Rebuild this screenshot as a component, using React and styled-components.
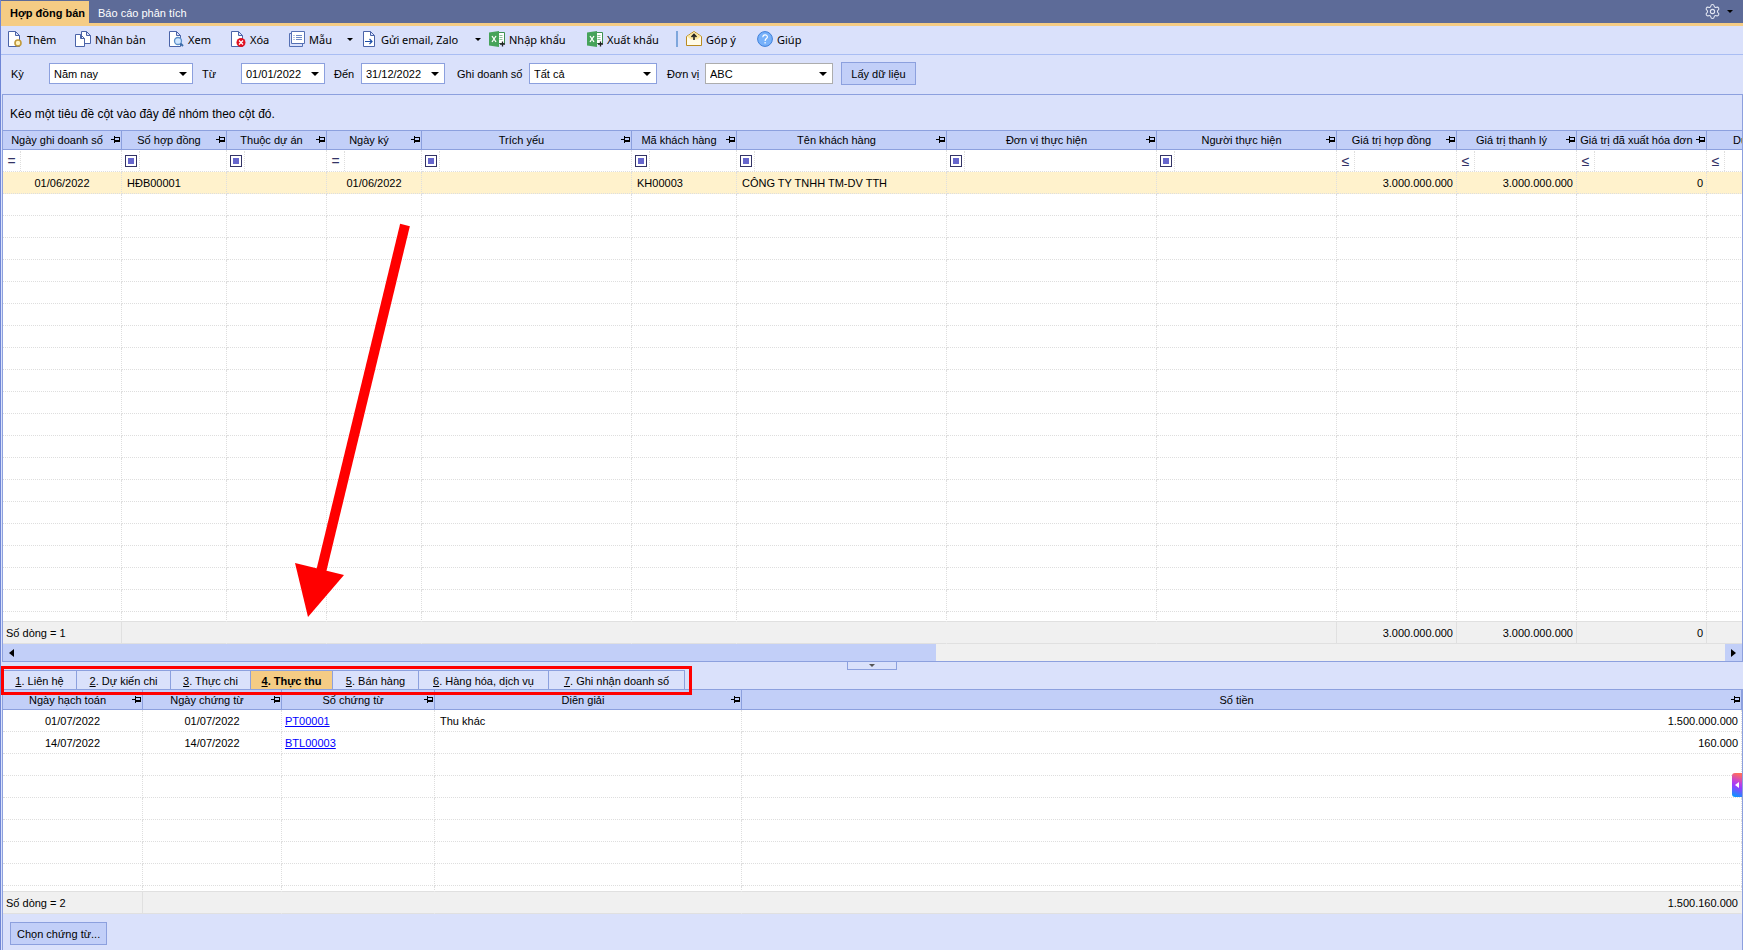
import React from 'react';
import styled, { createGlobalStyle, css } from 'styled-components';
import { Settings } from 'lucide-react';

const GlobalStyle = createGlobalStyle`
  * {
    box-sizing: border-box;
  }

  body {
    margin: 0;
    font-family: 'Liberation Sans', Arial, sans-serif;
    font-size: 11px;
    color: #000;
  }

  button, input, select {
    font: inherit;
    color: inherit;
    margin: 0;
  }
`;

const Page = styled.div`
  position: relative;
  display: flex;
  flex-direction: column;
  height: 100vh;
  overflow: hidden;
  background-color: #dae1fb;
  border-left: 1px solid #6f86d6;
`;

const TitleBar = styled.header`
  display: flex;
  flex: none;
  height: 26px;
  padding-top: 1px;
  background-color: #5d6b98;
  border-bottom: 3px solid #f5cc84;
`;

const PageTab = styled.button`
  padding: 2px 4px 0 9px;
  border: 0;
  background-color: ${(p) => (p.$active ? '#f5cc84' : 'transparent')};
  color: ${(p) => (p.$active ? '#000' : '#fff')};
  font-weight: ${(p) => (p.$active ? 'bold' : 'normal')};
  text-align: left;
  white-space: nowrap;
`;

const SettingsButton = styled.button`
  display: flex;
  align-items: center;
  gap: 6px;
  margin-left: auto;
  padding: 0 10px 2px 0;
  border: 0;
  background: none;
`;

const Toolbar = styled.div`
  display: flex;
  flex: none;
  align-items: center;
  height: 29px;
  padding: 0 0 2px 6px;
  border-bottom: 1px solid #a9bdf3;
`;

const ToolButton = styled.button`
  display: flex;
  align-items: center;
  gap: 4px;
  width: ${(p) => p.$width}px;
  height: 24px;
  padding: 0;
  border: 0;
  background: none;
  font-family: 'Noto Sans', sans-serif;
  white-space: nowrap;

  svg {
    flex: none;
  }
`;

const Separator = styled.div`
  width: 2px;
  height: 16px;
  margin-right: 8px;
  background-color: #7ea6dc;
`;

const Caret = styled.span`
  width: 0;
  height: 0;
  border: 3px solid transparent;
  border-top-color: ${(p) => p.$color || '#000'};
  border-bottom: 0;
`;

const ToolCaret = styled(Caret)`
  margin-left: auto;
  margin-right: 8px;
`;

const FilterBar = styled.form`
  display: flex;
  flex: none;
  align-items: center;
  height: 39px;
  padding: 0 0 2px 10px;
`;

const Label = styled.label`
  width: ${(p) => p.$width}px;
  white-space: nowrap;
`;

const SelectBox = styled.div`
  position: relative;
  width: ${(p) => p.$width}px;
  margin-right: ${(p) => p.$after}px;

  &::after {
    content: '';
    position: absolute;
    right: 6px;
    top: 9px;
    border: 4px solid transparent;
    border-top-color: #000;
    border-bottom: 0;
    pointer-events: none;
  }
`;

const Select = styled.select`
  display: block;
  width: 100%;
  height: 21px;
  padding: 0 16px 0 4px;
  appearance: none;
  border: 1px solid ${(p) => (p.$muted ? '#adadad' : '#8ca0de')};
  border-radius: 0;
  background-color: #fff;
`;

const PushButton = styled.button`
  height: 23px;
  padding: 0 6px;
  min-width: ${(p) => p.$width}px;
  border: 1px solid #8ca0de;
  background-color: #c2cff8;
  white-space: nowrap;
`;

const Panel = styled.section`
  display: flex;
  flex-direction: column;
  flex: ${(p) => (p.$grow ? '1' : 'none')};
  min-height: 0;
  margin-left: 1px;
  border: 1px solid #8ca0de;
  border-width: ${(p) => (p.$grow ? '1px' : '0 1px')};
`;

const GroupHint = styled.div`
  display: flex;
  align-items: center;
  flex: none;
  height: 35px;
  padding: 2px 0 0 7px;
  font-size: 12px;
`;

const TableClip = styled.div`
  overflow: hidden;
  min-height: 0;
  background-color: #fff;
  ${(p) => (p.$height ? css`flex: 0 0 ${p.$height}px;` : css`flex: 1;`)}
`;

const SummaryClip = styled.div`
  flex: none;
  overflow: hidden;
`;

const Table = styled.table`
  width: 100%;
  min-width: ${(p) => p.$minWidth || 0}px;
  table-layout: fixed;
  border-collapse: separate;
  border-spacing: 0;
`;

const HeadCell = styled.th`
  height: ${(p) => p.$height}px;
  padding: 0;
  border: 1px solid #8ca0de;
  border-left: 0;
  background-color: #c2cff8;
  font-weight: normal;
`;

const HeadContent = styled.div`
  display: flex;
  align-items: center;

  span {
    flex: 1;
    text-align: center;
    white-space: nowrap;
  }

  svg {
    flex: none;
  }
`;

const Cell = styled.td`
  height: 22px;
  padding: 0 ${(p) => (p.$align === 'center' ? 5 : 3)}px 0 ${(p) => (p.$link ? 3 : 5)}px;
  border-right: 1px dotted #dedede;
  border-bottom: 1px dotted #dedede;
  text-align: ${(p) => p.$align || 'left'};
  white-space: nowrap;
  background-color: ${(p) => (p.$selected ? '#fff2cc' : '#fff')};

  a {
    color: #0000ff;
  }
`;

const FilterCell = styled(Cell)`
  padding: 0;
`;

const FilterContent = styled.div`
  display: flex;
  align-items: stretch;
  height: 20px;
`;

const Operator = styled.button`
  display: flex;
  align-items: center;
  justify-content: center;
  flex: none;
  width: 18px;
  padding: 0;
  border: 0;
  border-right: 1px dotted #dedede;
  background: none;
  color: #333366;
  font-size: 14px;
`;

const ContainsBox = styled.span`
  width: 12px;
  height: 12px;
  padding: 2px;
  border: 1px solid #333366;
  background-color: #6666cc;
  background-clip: content-box;
`;

const FilterInput = styled.input`
  flex: 1;
  min-width: 0;
  padding: 0 3px;
  border: 0;
  outline: none;
  background: none;
`;

const SummaryCell = styled.td`
  height: 23px;
  padding: 0 3px;
  border-top: 1px solid #e0e0e0;
  border-bottom: 1px solid #e0e0e0;
  border-right: 1px solid ${(p) => (p.$divider ? '#e0e0e0' : '#f0f0f0')};
  background-color: #f0f0f0;
  text-align: ${(p) => p.$align || 'left'};
  white-space: nowrap;
`;

const ScrollBar = styled.div`
  display: flex;
  flex: none;
  height: 17px;
  background-color: #f0f0f0;
`;

const ScrollButton = styled.button`
  display: flex;
  align-items: center;
  justify-content: center;
  width: 17px;
  padding: 0;
  border: 0;
  background-color: #c2cff8;
`;

const ScrollTrack = styled.div`
  display: grid;
  grid-template-columns: 43fr 37fr;
  flex: 1;
`;

const ScrollThumb = styled.div`
  background-color: #c2cff8;
`;

const DetailBar = styled.div`
  position: relative;
  display: flex;
  align-items: flex-end;
  flex: none;
  height: 27px;
  margin-left: 2px;
`;

const DetailTab = styled.button`
  width: ${(p) => p.$width}px;
  height: 19px;
  padding: 2px 0 0;
  border: 1px solid #8ca0de;
  border-left: 0;
  border-bottom: 0;
  background-color: ${(p) => (p.$active ? '#f5cc84' : '#dae1fb')};
  font-weight: ${(p) => (p.$active ? 'bold' : 'normal')};
  white-space: nowrap;
`;

const Highlight = styled.div`
  position: absolute;
  z-index: 1;
  left: -2px;
  top: 4px;
  width: 691px;
  height: 29px;
  border: 3px solid #ff0000;
  pointer-events: none;
`;

const Splitter = styled.button`
  position: absolute;
  left: calc(50% - 26px);
  top: 0;
  display: flex;
  align-items: center;
  justify-content: center;
  width: 50px;
  height: 8px;
  padding: 0;
  border: 1px solid #8ca0de;
  border-top: 0;
  background-color: #dae1fb;
`;

const Footer = styled.footer`
  flex: none;
  height: 36px;
  padding: 8px 0 0 7px;
  margin-left: 1px;
  border: 1px solid #8ca0de;
  border-width: 0 1px;
`;

const SideHandle = styled.button`
  position: absolute;
  right: 1px;
  bottom: 153px;
  display: flex;
  align-items: center;
  justify-content: flex-end;
  width: 10px;
  height: 24px;
  padding: 0 3px 0 0;
  border: 0;
  border-radius: 3px 0 0 3px;
  background: linear-gradient(20deg, #0a95ff 5%, #9a3cff 45%, #c040e0 60%, #ff6c60 92%);
`;

const Pointer = styled.svg`
  position: absolute;
  left: 294px;
  top: 222px;
  pointer-events: none;
`;

// icons

const Sheet = ({ x = 1 }) => (
  <path d={`M${x + 0.5} .5h7l4 4v11h-11z M${x + 7.5} .5v4h4`} fill="#fff" stroke="#4a63a8" />
);

const AddIcon = () => (
  <svg width="16" height="16">
    <Sheet x={1} />
    <circle cx="11" cy="12" r="3" fill="#fff3c0" stroke="#c29a3a" strokeWidth="1.6" />
  </svg>
);

const CopyIcon = () => (
  <svg width="16" height="16">
    <path d="M6.500 .5h5l4 4v8h-9z M11.500 .5v4h4" fill="#fff" stroke="#4a63a8" />
    <path d="M.5 3.500h5l4 4v8h-9z M5.500 3.500v4h4" fill="#fff" stroke="#4a63a8" />
  </svg>
);

const ViewIcon = () => (
  <svg width="16" height="16">
    <Sheet x={1} />
    <circle cx="10" cy="10" r="3.500" fill="#cfe6ff" stroke="#5b8fc9" strokeWidth="1.300" />
    <path d="M12.500 12.500l2.500 2.500" stroke="#3c6ca8" strokeWidth="2" />
  </svg>
);

const DeleteIcon = () => (
  <svg width="16" height="16">
    <Sheet x={1} />
    <circle cx="11" cy="11.500" r="4.500" fill="#e01020" />
    <path d="M9 9.500l4 4m0-4l-4 4" stroke="#fff" strokeWidth="1.300" />
  </svg>
);

const TemplateIcon = () => (
  <svg width="17" height="16" fill="none" stroke="#5570b4">
    <path d="M3.500 .5h13v12h-13z" fill="#fff" />
    <path d="M3 2.500h-1.500v13h13v-2.500" />
    <path d="M5.500 4.500h1m1.500 0h6M5.500 6.500h1m1.500 0h6M5.500 8.500h1m1.500 0h6" stroke="#6d8ac6" />
  </svg>
);

const SendIcon = () => (
  <svg width="16" height="16">
    <Sheet x={2} />
    <path d="M4 10.500h7M8.500 8l2.500 2.500-2.500 2.500" fill="none" stroke="#1f4fa8" strokeWidth="1.200" />
  </svg>
);

const ExcelIcon = () => (
  <svg width="16" height="16">
    <path d="M8.500 1.500h7v11h-7z" fill="#fff" stroke="#3d9150" />
    <path d="M10.500 4.500h3m-3 2h3m-3 2h3" stroke="#8fc29a" />
    <path d="M0 1.500l10-1.500v16l-10-1.500z" fill="#46a35a" />
    <path d="M3 5l4 6m0-6l-4 6" stroke="#fff" strokeWidth="1.300" />
    <path d="M11 13h5M13.500 10.500v5" stroke="#222" strokeWidth="1.300" />
  </svg>
);

const FeedbackIcon = () => (
  <svg width="16" height="16">
    <path d="M.5 5.500l7.500-5 7.500 5v9h-15z" fill="#fffbe8" stroke="#b98a20" />
    <path d="M1 5.500L8 1l7 4.500-4 3H5z" fill="#fbe7a0" />
    <path d="M8 9V4M5.500 6L8 3.500 10.500 6" fill="none" stroke="#222" strokeWidth="1.600" />
  </svg>
);

const HelpIcon = () => (
  <svg width="16" height="16">
    <circle cx="8" cy="8" r="7.400" fill="#77b1fa" stroke="#3f7fd8" />
    <path d="M5.800 6.200c0-3.200 4.600-3 4.600-.3 0 1.700-2.300 1.700-2.300 4M8.100 11v1.400" fill="none" stroke="#fff" strokeWidth="1.200" />
  </svg>
);

const PinIcon = () => (
  <svg width="10" height="8" shapeRendering="crispEdges">
    <path d="M0 3h3v1H0zM3 0h1v7H3zM4 1h5v1H4zM8 1h1v5H8zM4 4h5v2H4z" />
  </svg>
);

const toolItems = [
  { label: 'Thêm', icon: AddIcon, width: 68 },
  { label: 'Nhân bản', icon: CopyIcon, width: 93 },
  { label: 'Xem', icon: ViewIcon, width: 62 },
  { label: 'Xóa', icon: DeleteIcon, width: 58 },
  { label: 'Mẫu', icon: TemplateIcon, width: 73, menu: true },
  { label: 'Gửi email, Zalo', icon: SendIcon, width: 128, menu: true },
  { label: 'Nhập khẩu', icon: ExcelIcon, width: 98 },
  { label: 'Xuất khẩu', icon: ExcelIcon, width: 89 },
  { separator: true },
  { label: 'Góp ý', icon: FeedbackIcon, width: 71 },
  { label: 'Giúp', icon: HelpIcon, width: 60 },
];

const filters = [
  { id: 'period', label: 'Kỳ', value: 'Năm nay', labelWidth: 38, width: 144, after: 9 },
  { id: 'from', label: 'Từ', value: '01/01/2022', labelWidth: 39, width: 84, after: 9 },
  { id: 'to', label: 'Đến', value: '31/12/2022', labelWidth: 27, width: 84, after: 12 },
  { id: 'sales', label: 'Ghi doanh số', value: 'Tất cả', labelWidth: 72, width: 128, after: 10 },
  { id: 'unit', label: 'Đơn vị', value: 'ABC', labelWidth: 38, width: 128, after: 8, muted: true },
];

const contractColumns = [
  { title: 'Ngày ghi doanh số', width: 119, op: '=', align: 'center', value: '01/06/2022', total: 'Số dòng = 1', divider: true },
  { title: 'Số hợp đồng', width: 105, value: 'HĐB00001' },
  { title: 'Thuộc dự án', width: 100 },
  { title: 'Ngày ký', width: 95, op: '=', align: 'center', value: '01/06/2022' },
  { title: 'Trích yếu', width: 210 },
  { title: 'Mã khách hàng', width: 105, value: 'KH00003' },
  { title: 'Tên khách hàng', width: 210, value: 'CÔNG TY TNHH TM-DV TTH' },
  { title: 'Đơn vị thực hiện', width: 210 },
  { title: 'Người thực hiện', width: 180, divider: true },
  { title: 'Giá trị hợp đồng', width: 120, op: '≤', align: 'right', value: '3.000.000.000', total: '3.000.000.000', divider: true },
  { title: 'Giá trị thanh lý', width: 120, op: '≤', align: 'right', value: '3.000.000.000', total: '3.000.000.000', divider: true },
  { title: 'Giá trị đã xuất hóa đơn', width: 130, op: '≤', align: 'right', value: '0', total: '0', divider: true },
  { title: 'Dự kiến thu', width: 120, op: '≤', align: 'right' },
];

const receiptColumns = [
  { title: 'Ngày hạch toán', key: 'posted', width: 140, align: 'center', total: 'Số dòng = 2', divider: true },
  { title: 'Ngày chứng từ', key: 'date', width: 139, align: 'center' },
  { title: 'Số chứng từ', key: 'number', width: 153, link: true },
  { title: 'Diễn giải', key: 'note', width: 307 },
  { title: 'Số tiền', key: 'amount', align: 'right', total: '1.500.160.000' },
];

const receipts = [
  { posted: '01/07/2022', date: '01/07/2022', number: 'PT00001', note: 'Thu khác', amount: '1.500.000.000' },
  { posted: '14/07/2022', date: '14/07/2022', number: 'BTL00003', note: '', amount: '160.000' },
];

const detailTabs = [
  { title: 'Liên hệ', width: 74 },
  { title: 'Dự kiến chi', width: 94 },
  { title: 'Thực chi', width: 80 },
  { title: 'Thực thu', width: 82, active: true },
  { title: 'Bán hàng', width: 86 },
  { title: 'Hàng hóa, dịch vụ', width: 130 },
  { title: 'Ghi nhận doanh số', width: 136 },
];

const contractWidth = contractColumns.reduce((sum, c) => sum + c.width, 0);

const Columns = ({ columns }) => (
  <colgroup>
    {columns.map((c) => <col key={c.title} width={c.width} />)}
  </colgroup>
);

const Head = ({ columns, height }) => (
  <thead>
    <tr>
      {columns.map((c) => (
        <HeadCell key={c.title} scope="col" $height={height}>
          <HeadContent><span>{c.title}</span><PinIcon /></HeadContent>
        </HeadCell>
      ))}
    </tr>
  </thead>
);

const EmptyRows = ({ columns, count }) => (
  Array.from({ length: count }, (_, i) => (
    <tr key={`empty-${i}`}>
      {columns.map((c) => <Cell key={c.title} />)}
    </tr>
  ))
);

const Summary = ({ columns, minWidth }) => (
  <SummaryClip>
    <Table $minWidth={minWidth}>
      <Columns columns={columns} />
      <tbody>
        <tr>
          {columns.map((c, i) => (
            <SummaryCell key={c.title} $align={i === 0 ? 'left' : c.align} $divider={c.divider}>{c.total}</SummaryCell>
          ))}
        </tr>
      </tbody>
    </Table>
  </SummaryClip>
);

function ContractGrid() {
  return (
    <Panel $grow>
      <GroupHint>Kéo một tiêu đề cột vào đây để nhóm theo cột đó.</GroupHint>
      <TableClip>
        <Table $minWidth={contractWidth}>
          <Columns columns={contractColumns} />
          <Head columns={contractColumns} height={20} />
          <tbody>
            <tr>
              {contractColumns.map((c) => (
                <FilterCell key={c.title}>
                  <FilterContent>
                    <Operator type="button" aria-label={`Điều kiện ${c.title}`}>{c.op || <ContainsBox />}</Operator>
                    <FilterInput aria-label={c.title} />
                  </FilterContent>
                </FilterCell>
              ))}
            </tr>
            <tr>
              {contractColumns.map((c) => (
                <Cell key={c.title} $align={c.align} $selected>{c.value}</Cell>
              ))}
            </tr>
            <EmptyRows columns={contractColumns} count={60} />
          </tbody>
        </Table>
      </TableClip>
      <Summary columns={contractColumns} minWidth={contractWidth} />
      <ScrollBar>
        <ScrollButton type="button" aria-label="Cuộn trái">
          <svg width="5" height="8"><path d="M5 0v8L0 4z" /></svg>
        </ScrollButton>
        <ScrollTrack><ScrollThumb /></ScrollTrack>
        <ScrollButton type="button" aria-label="Cuộn phải">
          <svg width="5" height="8"><path d="M0 0v8l5-4z" /></svg>
        </ScrollButton>
      </ScrollBar>
    </Panel>
  );
}

function ReceiptGrid() {
  return (
    <Panel>
      <TableClip $height={202}>
        <Table>
          <Columns columns={receiptColumns} />
          <Head columns={receiptColumns} height={21} />
          <tbody>
            {receipts.map((row) => (
              <tr key={row.number}>
                {receiptColumns.map((c) => (
                  <Cell key={c.key} $align={c.align} $link={c.link}>
                    {c.link ? <a href={`#${row.number}`}>{row[c.key]}</a> : row[c.key]}
                  </Cell>
                ))}
              </tr>
            ))}
            <EmptyRows columns={receiptColumns} count={7} />
          </tbody>
        </Table>
      </TableClip>
      <Summary columns={receiptColumns} />
    </Panel>
  );
}

function App() {
  return (
    <Page>
      <GlobalStyle />
      <TitleBar>
        <PageTab type="button" $active>Hợp đồng bán</PageTab>
        <PageTab type="button">Báo cáo phân tích</PageTab>
        <SettingsButton type="button" aria-label="Thiết lập">
          <Settings size={17} strokeWidth={1.5} color="#e4e8f4" />
          <Caret />
        </SettingsButton>
      </TitleBar>
      <Toolbar>
        {toolItems.map((item) => (
          item.separator ? <Separator key="separator" /> : (
            <ToolButton key={item.label} type="button" $width={item.width}>
              <item.icon />
              {item.label}
              {item.menu && <ToolCaret />}
            </ToolButton>
          )
        ))}
      </Toolbar>
      <FilterBar>
        {filters.map((f) => (
          <React.Fragment key={f.id}>
            <Label htmlFor={f.id} $width={f.labelWidth}>{f.label}</Label>
            <SelectBox $width={f.width} $after={f.after}>
              <Select id={f.id} $muted={f.muted}>
                <option>{f.value}</option>
              </Select>
            </SelectBox>
          </React.Fragment>
        ))}
        <PushButton type="button" $width={75}>Lấy dữ liệu</PushButton>
      </FilterBar>
      <ContractGrid />
      <DetailBar>
        {detailTabs.map((tab, i) => (
          <DetailTab key={tab.title} type="button" $width={tab.width} $active={tab.active}>
            <u>{i + 1}</u>. {tab.title}
          </DetailTab>
        ))}
        <Highlight />
        <Splitter type="button" aria-label="Thu gọn"><Caret $color="#555" /></Splitter>
      </DetailBar>
      <ReceiptGrid />
      <Footer>
        <PushButton type="button" $width={96}>Chọn chứng từ...</PushButton>
      </Footer>
      <SideHandle type="button" aria-label="Mở trợ lý">
        <svg width="4" height="6"><path d="M4 0v6L0 3z" fill="#fff" /></svg>
      </SideHandle>
      <Pointer width="130" height="400" aria-hidden="true">
        <path d="M110 3L26 350" stroke="#ff0000" strokeWidth="10" />
        <path d="M0 341l49 12-36 42z" fill="#ff0000" />
      </Pointer>
    </Page>
  );
}

export default App;
